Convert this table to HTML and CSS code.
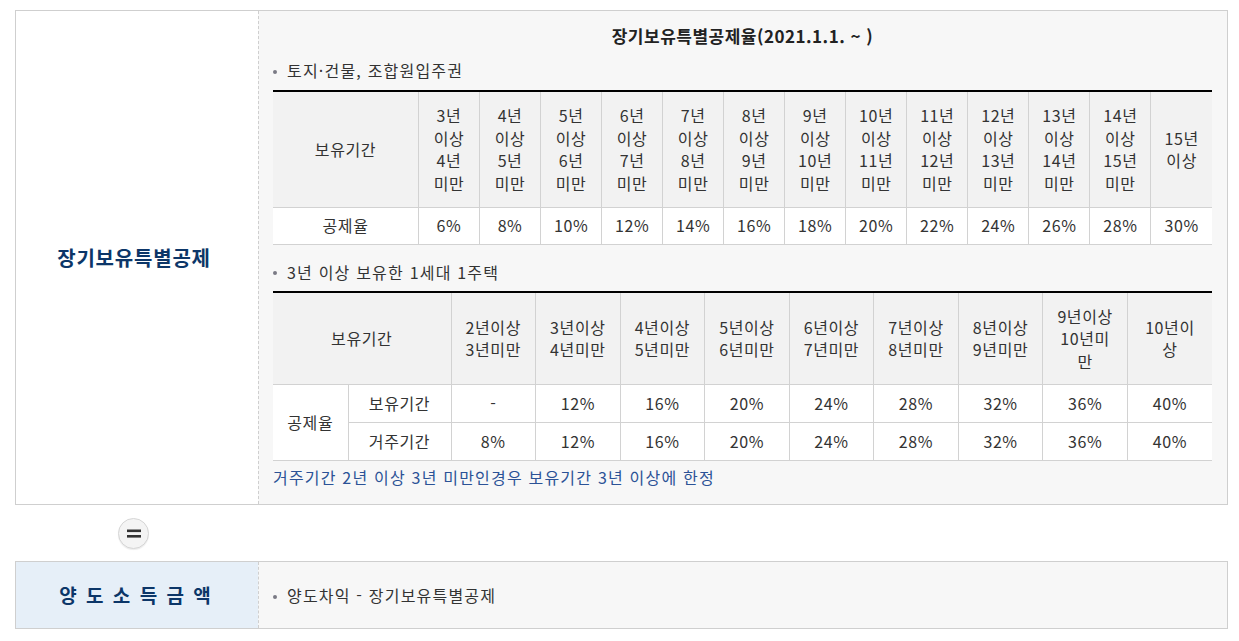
FILE: index.html
```html
<!DOCTYPE html>
<html lang="ko">
<head>
<meta charset="utf-8">
<title>장기보유특별공제</title>
<link rel="stylesheet" href="styles.css">
</head>
<body>
<div class="page">
  <section class="box">
    <div class="box-label"><span>장기보유특별공제</span></div>
    <div class="box-body">
      <h2 class="rate-title">장기보유특별공제율(2021.1.1. ~ )</h2>
      <p class="bullet">토지·건물, 조합원입주권</p>
      <table class="rate-table t1">
        <colgroup><col class="c-head"><col span="13"></colgroup>
        <thead>
          <tr>
            <th>보유기간</th>
            <th>3년<br>이상<br>4년<br>미만</th>
            <th>4년<br>이상<br>5년<br>미만</th>
            <th>5년<br>이상<br>6년<br>미만</th>
            <th>6년<br>이상<br>7년<br>미만</th>
            <th>7년<br>이상<br>8년<br>미만</th>
            <th>8년<br>이상<br>9년<br>미만</th>
            <th>9년<br>이상<br>10년<br>미만</th>
            <th>10년<br>이상<br>11년<br>미만</th>
            <th>11년<br>이상<br>12년<br>미만</th>
            <th>12년<br>이상<br>13년<br>미만</th>
            <th>13년<br>이상<br>14년<br>미만</th>
            <th>14년<br>이상<br>15년<br>미만</th>
            <th>15년<br>이상</th>
          </tr>
        </thead>
        <tbody>
          <tr>
            <td>공제율</td>
            <td>6%</td><td>8%</td><td>10%</td><td>12%</td><td>14%</td><td>16%</td><td>18%</td>
            <td>20%</td><td>22%</td><td>24%</td><td>26%</td><td>28%</td><td>30%</td>
          </tr>
        </tbody>
      </table>
      <p class="bullet b2">3년 이상 보유한 1세대 1주택</p>
      <table class="rate-table t2">
        <colgroup><col class="c-a"><col class="c-b"><col span="9"></colgroup>
        <thead>
          <tr>
            <th colspan="2">보유기간</th>
            <th>2년이상<br>3년미만</th>
            <th>3년이상<br>4년미만</th>
            <th>4년이상<br>5년미만</th>
            <th>5년이상<br>6년미만</th>
            <th>6년이상<br>7년미만</th>
            <th>7년이상<br>8년미만</th>
            <th>8년이상<br>9년미만</th>
            <th>9년이상<br>10년미<br>만</th>
            <th>10년이<br>상</th>
          </tr>
        </thead>
        <tbody>
          <tr>
            <td rowspan="2" class="first">공제율</td>
            <td>보유기간</td>
            <td>-</td><td>12%</td><td>16%</td><td>20%</td><td>24%</td><td>28%</td><td>32%</td><td>36%</td><td>40%</td>
          </tr>
          <tr>
            <td class="sub">거주기간</td>
            <td>8%</td><td>12%</td><td>16%</td><td>20%</td><td>24%</td><td>28%</td><td>32%</td><td>36%</td><td>40%</td>
          </tr>
        </tbody>
      </table>
      <p class="note">거주기간 2년 이상 3년 미만인경우 보유기간 3년 이상에 한정</p>
    </div>
  </section>

  <div class="eq-row">
    <span class="eq" aria-label="=">
      <svg width="14" height="9" viewBox="0 0 14 9"><rect x="0" y="0.5" width="14" height="2.6" fill="#333"/><rect x="0" y="6" width="14" height="2.6" fill="#333"/></svg>
    </span>
  </div>

  <section class="box box-result">
    <div class="box-label label-blue"><span>양 도 소 득 금 액</span></div>
    <div class="box-body body-center">
      <p class="bullet">양도차익 - 장기보유특별공제</p>
    </div>
  </section>
</div>
</body>
</html>
```

FILE: styles.css
```css
* { box-sizing: border-box; }

body {
  margin: 0;
  background: #fff;
  color: #333;
  font-family: "Noto Sans CJK KR", "Noto Sans", sans-serif;
}

.page {
  padding: 10px 11px 10px 15px;
}

.box {
  display: flex;
  border: 1px solid #cfcfcf;
}

.box-label {
  width: 242px;
  flex: none;
  display: flex;
  align-items: center;
  justify-content: center;
  background: #fff;
  color: #0c3668;
  font-size: 20px;
  font-weight: bold;
  letter-spacing: 0.8px;
  line-height: 26px;
  padding-right: 6px;
}

.box-body {
  flex: 1;
  min-width: 0;
  background: #f7f7f7;
  border-left: 1px dashed #cfcfcf;
  padding: 13px 15px 15px 14px;
}

.rate-title {
  margin: 0;
  text-align: center;
  font-size: 17px;
  letter-spacing: 0.5px;
  line-height: 24px;
  font-weight: bold;
  color: #222;
}

.bullet {
  margin: 10px 0 8px;
  font-size: 16px;
  letter-spacing: 1.2px;
  line-height: 24px;
  color: #333;
}

.bullet::before {
  content: "";
  display: inline-block;
  width: 4px;
  height: 4px;
  border-radius: 50%;
  background: #7a7a85;
  vertical-align: middle;
  margin: -2px 10px 0 0;
}

.bullet.b2 {
  margin-top: 15px;
  margin-bottom: 7px;
}

.rate-table {
  width: 100%;
  border-collapse: collapse;
  table-layout: fixed;
  border-top: 2px solid #000;
  font-size: 16px;
  letter-spacing: 0.6px;
  line-height: 22.5px;
  text-align: center;
  color: #333;
}

.rate-table th,
.rate-table td {
  border: 1px solid #d2d2d2;
  padding: 0;
  vertical-align: middle;
}

.rate-table th {
  background: #f2f2f2;
  font-weight: normal;
}

.rate-table td {
  background: #fff;
}

.rate-table tr > :first-child { border-left: none; }
.rate-table tr > :last-child { border-right: none; }
.rate-table td.sub { border-left: 1px solid #d2d2d2; }

.t1 .c-head { width: 145.5px; }
.t1 thead th { height: 116px; }
.t1 tbody td { height: 37px; }

.t2 .c-a { width: 75px; }
.t2 .c-b { width: 103px; }
.t2 thead th { height: 93px; }
.t2 tbody td { height: 38px; }

.note {
  margin: 4px 0 0;
  font-size: 16px;
  letter-spacing: 1.2px;
  line-height: 24px;
  color: #2b5296;
}

.eq-row {
  display: flex;
  padding: 13px 0 12px 103px;
}

.eq {
  width: 31px;
  height: 31px;
  border-radius: 50%;
  border: 1px solid #d6d6d6;
  background: #f4f4f4;
  box-shadow: 0 1px 1px rgba(0, 0, 0, 0.08);
  display: flex;
  align-items: center;
  justify-content: center;
}

.eq svg { display: block; }

.box-result .box-label {
  height: 66px;
}

.label-blue {
  background: #e6eff8;
  letter-spacing: 2px;
  font-size: 19px;
  padding-right: 2px;
}

.body-center {
  display: flex;
  align-items: center;
  padding-top: 0;
  padding-bottom: 0;
}

.body-center .bullet {
  margin: 0;
}
```
